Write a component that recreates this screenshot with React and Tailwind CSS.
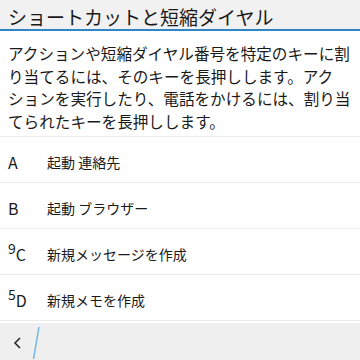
const rows = [
  { sup: "", key: "A", label: "起動 連絡先" },
  { sup: "", key: "B", label: "起動 ブラウザー" },
  { sup: "9", key: "C", label: "新規メッセージを作成" },
  { sup: "5", key: "D", label: "新規メモを作成" },
];

export default function App() {
  return (
    <div className="w-[360px] h-[360px] bg-white text-[#1a1a1a] flex flex-col overflow-hidden font-['Noto_Sans_CJK_JP','Noto_Sans',sans-serif]">
      <div className="h-[31px] bg-[#f1f1f1] border-b-2 border-[#2f86c6] flex items-center pt-[3px] px-2">
        <h1 className="text-[19px] leading-none whitespace-nowrap">ショートカットと短縮ダイヤル</h1>
      </div>

      <p className="px-2 pt-[11px] pb-[4px] text-[15.6px] leading-[22.5px] whitespace-nowrap">
        アクションや短縮ダイヤル番号を特定のキーに割
        <br />
        り当てるには、そのキーを長押しします。アク
        <br />
        ションを実行したり、電話をかけるには、割り当
        <br />
        てられたキーを長押しします。
      </p>

      <div className="border-t border-[#ececec]">
        {rows.map((r) => (
          <div
            key={r.key}
            className="h-[46px] border-b border-[#ececec] flex items-center pt-[5px] px-2"
          >
            <div className="w-[39px] flex items-end text-[16px] leading-none">
              {r.sup && <span className="text-[14px] relative -top-[7px]">{r.sup}</span>}
              <span>{r.key}</span>
            </div>
            <span className="text-[14px]">{r.label}</span>
          </div>
        ))}
      </div>

      <div className="mt-[2px] flex-1 bg-[#efefef] relative">
        <svg className="absolute left-[13px] top-[14px]" width="10" height="12" viewBox="0 0 10 12">
          <path d="M7 1 L2 6 L7 11" fill="none" stroke="#222" strokeWidth="1.5" />
        </svg>
        <svg className="absolute left-[32px] top-[4px]" width="8" height="32" viewBox="0 0 8 32">
          <path d="M7 0 L1.5 32" stroke="#78b9e3" strokeWidth="1.5" />
        </svg>
      </div>
    </div>
  );
}
